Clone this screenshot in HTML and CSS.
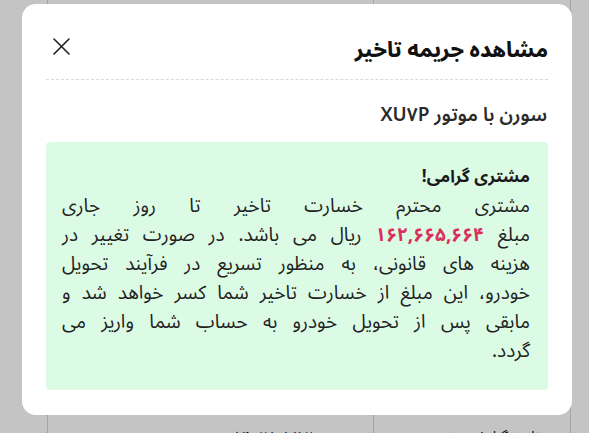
FILE: index.html
```html
<!DOCTYPE html>
<html lang="fa">
<head>
<meta charset="utf-8">
<title>مشاهده جریمه تاخیر</title>
<link rel="stylesheet" href="styles.css">
</head>
<body>
<div class="page" dir="rtl">
  <div class="table">
    <div class="row">
      <div class="cell c1"></div>
      <div class="cell c2"></div>
    </div>
    <div class="row last">
      <div class="cell c1"><span class="t1">تاریخ گزارش</span><span class="t2">وضعیت</span></div>
      <div class="cell c2"><span class="t3">۱۴۰۲/۰۵/۱۲ خودرو</span></div>
    </div>
  </div>
</div>
<div class="overlay"></div>
<div class="modal" dir="rtl">
  <div class="header">
    <h2 class="title">مشاهده جریمه تاخیر</h2>
    <button class="close" aria-label="بستن">
      <svg width="17" height="17" viewBox="0 0 17 17"><path d="M1 1L16 16M16 1L1 16" stroke="#222" stroke-width="1.6" stroke-linecap="round" fill="none"/></svg>
    </button>
  </div>
  <div class="subtitle">سورن با موتور XU۷P</div>
  <div class="notice">
    <div class="notice-title">مشتری گرامی!</div>
    <p class="notice-text">
      <span class="ln">مشتری محترم خسارت تاخیر تا روز جاری</span>
      <span class="ln">مبلغ <b class="amount">۱۶۲,۶۶۵,۶۶۴</b> ریال می باشد. در صورت تغییر در</span>
      <span class="ln">هزینه های قانونی، به منظور تسریع در فرآیند تحویل</span>
      <span class="ln">خودرو، این مبلغ از خسارت تاخیر شما کسر خواهد شد و</span>
      <span class="ln">مابقی پس از تحویل خودرو به حساب شما واریز می</span>
      <span class="ln end">گردد.</span>
    </p>
  </div>
</div>
</body>
</html>
```
FILE: styles.css
```css
* { box-sizing: border-box; }
html, body { margin: 0; padding: 0; }
body {
  width: 589px;
  height: 433px;
  overflow: hidden;
  background: #ffffff;
  font-family: "Noto Sans Arabic", "DejaVu Sans", sans-serif;
  position: relative;
}
.page {
  padding: 0 18px 0 47px;
  height: 433px;
}
.table {
  border-left: 1px solid #d4d4d4;
  border-right: 1px solid #d4d4d4;
  height: 100%;
  display: flex;
  flex-direction: column;
}
.row {
  display: flex;
  flex: 1;
  min-height: 0;
}
.row.last {
  flex: 0 0 8px;
  font-size: 15px;
  color: #111;
  line-height: 20px;
}
.cell { white-space: nowrap; display: flex; justify-content: space-between; }
.row.last .cell { padding-top: 2px; }
.c1 { width: 197px; border-left: 1px solid #d4d4d4; padding: 0 30px 0 40px; }
.c2 { flex: 1; padding: 0 60px 0 60px; }
.overlay {
  position: absolute;
  inset: 0;
  background: rgba(0, 0, 0, 0.23);
}
.modal {
  position: absolute;
  left: 22px;
  top: 4px;
  width: 550px;
  height: 411px;
  background: #fff;
  border-radius: 14px;
  padding: 0 24px 24px;
  color: #222;
}
.header {
  display: flex;
  align-items: center;
  justify-content: space-between;
  padding: 28px 0 11px;
  border-bottom: 1.5px dashed #d9d9d9;
}
.title {
  margin: 0;
  font-size: 21px;
  line-height: 36px;
  font-weight: 800;
  color: #111;
}
.close {
  width: 30px;
  height: 30px;
  border: 0;
  background: transparent;
  padding: 0;
  display: flex;
  align-items: center;
  justify-content: center;
  margin-top: -8px;
  cursor: pointer;
}
.subtitle {
  margin-top: 20px;
  font-size: 19px;
  line-height: 30px;
  font-weight: 600;
  color: #2a2a2a;
  padding-right: 1px;
}
.notice {
  margin-top: 12px;
  background: #dcfbe5;
  border-radius: 4px;
  padding: 20px 18px 24px 16px;
}
.notice-title {
  font-size: 17px;
  font-weight: 700;
  line-height: 30px;
  color: #1a1a1a;
}
.notice-text {
  margin: 0;
  font-size: 19px;
  line-height: 29px;
  color: #222;
}
.ln {
  display: block;
  white-space: nowrap;
  text-align: justify;
  text-align-last: justify;
}
.ln.end { text-align-last: right; }
.amount {
  color: #d9305c;
  font-weight: 700;
}
```
